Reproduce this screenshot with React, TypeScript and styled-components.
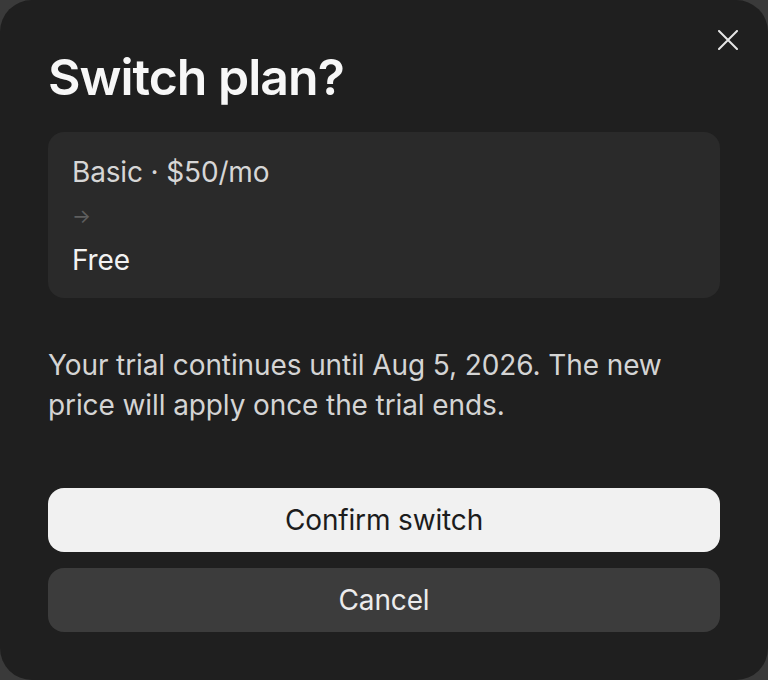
import React from "react";
import styled, { createGlobalStyle } from "styled-components";

const Global = createGlobalStyle`
  html, body { margin: 0; padding: 0; background: #3a3a3a; }
  body { font-family: Inter, "Noto Sans", sans-serif; -webkit-font-smoothing: antialiased; }
  * { box-sizing: border-box; }
`;

const Dialog = styled.div`
  position: relative;
  width: 768px;
  height: 680px;
  background: #1f1f1f;
  border-radius: 32px;
  padding: 48px 48px 48px 48px;
  display: flex;
  flex-direction: column;
`;

const Title = styled.h1`
  margin: 1px 0 0 0;
  font-size: 50px;
  line-height: 56px;
  font-weight: 600;
  color: #f7f7f7;
  letter-spacing: -1px;
`;

const CloseButton = styled.button`
  position: absolute;
  top: 24px;
  right: 24px;
  width: 32px;
  height: 32px;
  border: none;
  border-radius: 6px;
  background: transparent;
  padding: 0;
  display: flex;
  align-items: center;
  justify-content: center;
  color: #e6e6e6;
`;

const PlanCard = styled.div`
  margin-top: 27px;
  background: #2a2a2a;
  border-radius: 16px;
  padding: 20px 24px 18px;
  display: flex;
  flex-direction: column;
  gap: 4px;
`;

const PlanLine = styled.div<{ $muted?: boolean }>`
  font-size: 28px;
  line-height: 40px;
  letter-spacing: -0.15px;
  color: ${(p) => (p.$muted ? "#d6d6d6" : "#f2f2f2")};
`;

const Arrow = styled.div`
  font-size: 20px;
  line-height: 40px;
  color: #5e5e5e;
`;

const Description = styled.p`
  margin: 47px 0 0 0;
  font-size: 28px;
  line-height: 40px;
  letter-spacing: -0.1px;
  color: #d4d4d4;
`;

const Actions = styled.div`
  margin-top: auto;
  display: flex;
  flex-direction: column;
  gap: 16px;
`;

const ActionButton = styled.button<{ $primary?: boolean }>`
  height: 64px;
  border: none;
  border-radius: 16px;
  font-family: Inter, "Noto Sans", sans-serif;
  font-size: 28px;
  font-weight: 400;
  letter-spacing: -0.15px;
  background: ${(p) => (p.$primary ? "#f1f1f1" : "#3c3c3c")};
  color: ${(p) => (p.$primary ? "#1c1c1c" : "#ececec")};
  cursor: pointer;
`;

export default function App() {
  return (
    <>
      <Global />
      <Dialog>
        <CloseButton aria-label="Close">
          <svg width="20" height="20" viewBox="0 0 20 20" fill="none">
            <path d="M1 1L19 19M19 1L1 19" stroke="currentColor" strokeWidth="2" strokeLinecap="round" />
          </svg>
        </CloseButton>
        <Title>Switch plan?</Title>
        <PlanCard>
          <PlanLine $muted>Basic · $50/mo</PlanLine>
          <Arrow>→</Arrow>
          <PlanLine>Free</PlanLine>
        </PlanCard>
        <Description>
          Your trial continues until Aug 5, 2026. The new price will apply once the trial ends.
        </Description>
        <Actions>
          <ActionButton $primary>Confirm switch</ActionButton>
          <ActionButton>Cancel</ActionButton>
        </Actions>
      </Dialog>
    </>
  );
}
